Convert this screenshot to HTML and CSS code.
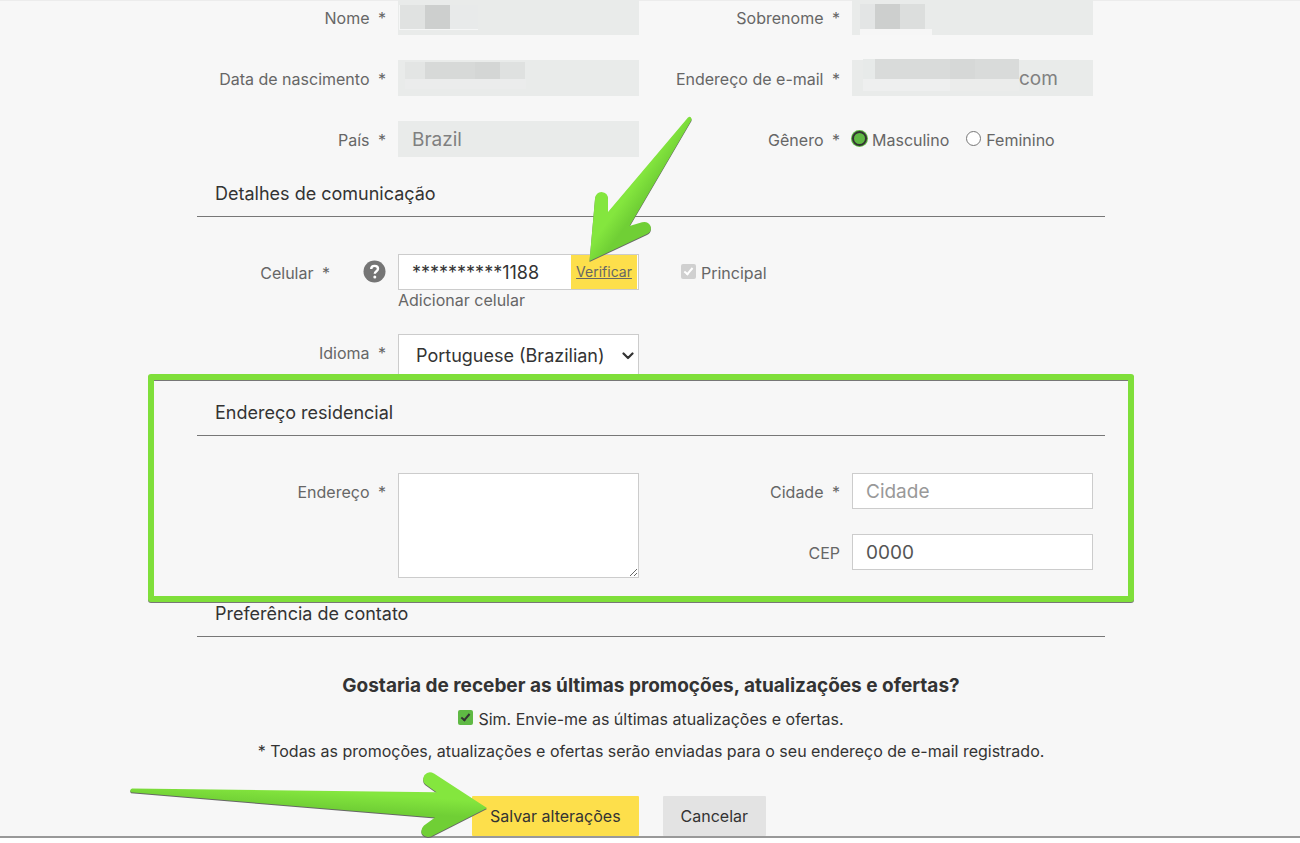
FILE: index.html
```html
<!DOCTYPE html>
<html lang="pt-BR">
<head>
  <meta charset="UTF-8" />
  <meta name="viewport" content="width=device-width, initial-scale=1.0"/>
  <title>Meu perfil</title>
  <link rel="stylesheet" href="styles.css">
</head>
<body>

<div class="page">
<form class="profile">

  <div class="grid personal">
    <div class="row">
      <label for="nome">Nome <span class="req">*</span></label>
      <div class="field">
        <input class="box" type="text" id="nome" disabled>
        <svg class="mask" width="241" height="40">
          <rect x="1" y="6" width="79" height="25" fill="#f5f6f6"/>
          <rect x="2" y="6" width="25" height="24" fill="#e0e2e1"/>
          <rect x="27" y="6" width="25" height="24" fill="#cdcfce"/>
          <rect x="52" y="6" width="28" height="24" fill="#e8eaea"/>
        </svg>
      </div>
    </div>
    <div class="row">
      <label for="sobrenome">Sobrenome <span class="req">*</span></label>
      <div class="field">
        <input class="box" type="text" id="sobrenome" disabled>
        <svg class="mask" width="241" height="40">
          <rect x="8" y="5" width="15" height="25" fill="#e3e5e5"/>
          <rect x="23" y="5" width="25" height="25" fill="#cdcfce"/>
          <rect x="48" y="5" width="25" height="25" fill="#dcdedd"/>
          <rect x="8" y="30" width="72" height="6" fill="#f6f6f6"/>
        </svg>
      </div>
    </div>
    <div class="row">
      <label for="nascimento">Data de nascimento <span class="req">*</span></label>
      <div class="field">
        <input class="box" type="text" id="nascimento" disabled>
        <svg class="mask" width="241" height="40">
          <rect x="7" y="2" width="20" height="17" fill="#e3e5e4"/>
          <rect x="27" y="2" width="50" height="17" fill="#d7d9d8"/>
          <rect x="77" y="2" width="25" height="17" fill="#d4d6d5"/>
          <rect x="102" y="2" width="25" height="17" fill="#dfe1e0"/>
          <rect x="7" y="19" width="121" height="10" fill="#ebecec"/>
        </svg>
      </div>
    </div>
    <div class="row">
      <label for="email">Endereço de e-mail <span class="req">*</span></label>
      <div class="field">
        <input class="box email" type="text" id="email" value="com" disabled>
        <svg class="mask email-mask" width="241" height="40">
          <rect x="11" y="0" width="12" height="20" fill="#e7eae9"/>
          <rect x="23" y="0" width="144" height="20" fill="#d9dbda"/>
          <rect x="98" y="0" width="25" height="20" fill="#d6d8d7"/>
          <rect x="11" y="20" width="87" height="12" fill="#eeefef"/>
          <rect x="98" y="20" width="69" height="12" fill="#ebeceb"/>
        </svg>
      </div>
    </div>
    <div class="row">
      <label for="pais">País <span class="req">*</span></label>
      <div class="field"><input class="box" type="text" id="pais" value="Brazil" disabled></div>
    </div>
    <div class="row">
      <span class="label">Gênero <span class="req">*</span></span>
      <div class="field radios">
        <label><input type="radio" name="genero" checked> Masculino</label>
        <label><input type="radio" name="genero"> Feminino</label>
      </div>
    </div>
  </div>

  <h2>Detalhes de comunicação</h2>
  <div class="grid contact">
    <div class="row">
      <label class="with-help" for="celular">Celular <span class="req">*</span></label>
      <svg class="help" width="23" height="23" viewBox="0 0 23 23">
        <circle cx="11.5" cy="11.5" r="11" fill="#757575"/>
        <path d="M8.2 9.1c0-2 1.4-3.2 3.4-3.2s3.4 1.1 3.4 2.9c0 2.5-3.2 2.4-3.2 5" fill="none" stroke="#fff" stroke-width="2.4"/>
        <circle cx="11.8" cy="16.9" r="1.5" fill="#fff"/>
      </svg>
      <div class="field">
        <div class="phone">
          <input type="text" id="celular" value="**********1188">
          <a href="#" class="verify">Verificar</a>
        </div>
        <a href="#" class="add">Adicionar celular</a>
      </div>
    </div>
    <label class="main-phone"><input type="checkbox" checked disabled> Principal</label>
    <div class="row">
      <label for="idioma">Idioma <span class="req">*</span></label>
      <div class="field select">
        <select id="idioma">
          <option>Portuguese (Brazilian)</option>
        </select>
        <svg class="chevron" width="12" height="8" viewBox="0 0 12 8">
          <path d="M1.5 1.5L6 6l4.500-4.500" fill="none" stroke="#333" stroke-width="2.200" stroke-linecap="round" stroke-linejoin="round"/>
        </svg>
      </div>
    </div>
  </div>

  <section class="address">
    <h2>Endereço residencial</h2>
    <div class="grid">
      <div class="row tall">
        <label for="endereco">Endereço <span class="req">*</span></label>
        <div class="field"><textarea class="box" id="endereco"></textarea></div>
      </div>
      <div class="row">
        <label for="cidade">Cidade <span class="req">*</span></label>
        <div class="field"><input class="box" type="text" id="cidade" placeholder="Cidade"></div>
      </div>
      <div class="row">
        <label for="cep">CEP</label>
        <div class="field"><input class="box" type="text" id="cep" value="0000"></div>
      </div>
    </div>
    <div class="highlight"></div>
  </section>

  <h2>Preferência de contato</h2>
  <div class="prefs">
    <h3>Gostaria de receber as últimas promoções, atualizações e ofertas?</h3>
    <label><input type="checkbox" checked> Sim. Envie-me as últimas atualizações e ofertas.</label>
    <p>* Todas as promoções, atualizações e ofertas serão enviadas para o seu endereço de e-mail registrado.</p>
  </div>

  <div class="buttons">
    <button type="submit" class="save">Salvar alterações</button>
    <button type="button" class="cancel">Cancelar</button>
  </div>

  <!-- arrow to the verify link -->
  <svg class="arrow arrow-verify" width="108" height="150" viewBox="586 115 108 150">
    <defs>
      <linearGradient id="g1" gradientUnits="userSpaceOnUse" x1="618" y1="208" x2="632" y2="218">
        <stop offset="0" stop-color="#84e63e"/>
        <stop offset="1" stop-color="#70cf35"/>
      </linearGradient>
    </defs>
    <path fill="url(#g1)" d="M589.500 262L595 199.500Q596 193 601.500 193Q608 193.500 608 200V213L688 118.500Q690.500 116.500 691.500 119.500V121L629.500 227L642 223.300Q648 222 650.500 227Q652 232.500 647 235Z"/>
  </svg>

  <!-- arrow to the save button -->
  <svg class="arrow arrow-save" width="362" height="70" viewBox="128 770 362 70">
    <defs>
      <linearGradient id="g2" gradientUnits="userSpaceOnUse" x1="400" y1="796" x2="399" y2="813">
        <stop offset="0" stop-color="#84e63e"/>
        <stop offset="1" stop-color="#70cf35"/>
      </linearGradient>
    </defs>
    <path fill="url(#g2)" d="M487 808L434 773.500Q428.500 770.500 424.500 775Q421.500 780 425 784L436.500 792.200L132 788.500Q129 790 131 792.300L435 817.500L424 825.500Q420 829.500 422 834Q425 838 431 836.500Z"/>
  </svg>
</form>
</div>

</body>
</html>
```

FILE: styles.css
```css
* {
  box-sizing: border-box;
}
body {
  margin: 0;
  background: #fff;
  color: #666;
  font-family: Inter, "Liberation Sans", sans-serif;
  font-size: 16px;
  line-height: 20px;
}
.page {
  padding-left: 2px;
  background: #f7f7f7;
  border-top: 1px solid #ececec;
  border-bottom: 2px solid #999;
}
.profile {
  position: relative;
  max-width: 908px;
  margin: 0 auto;
}
input, select, textarea, button {
  font-family: inherit;
}
a {
  color: inherit;
  text-decoration: none;
}
h2 {
  margin: 0 0 37px;
  padding: 2px 0 0 18px;
  border-bottom: 1px solid #777;
  color: #333;
  font-size: 18px;
  font-weight: 400;
  line-height: 44px;
}

/* form rows */
.grid {
  display: grid;
  grid-template-columns: 1fr 1fr;
  row-gap: 25px;
  margin-bottom: 13px;
}
.personal {
  margin-top: -2px;
}
.row {
  display: flex;
  gap: 12px;
  padding-right: 12px;
}
.tall {
  grid-row: span 2;
}
.row > label, .label {
  flex: 1;
  text-align: right;
  line-height: 38px;
  height: 36px;
}
.req {
  margin-left: 4px;
}
.field {
  position: relative;
  width: 241px;
}
.box {
  display: block;
  width: 100%;
  height: 36px;
  padding: 0 13px;
  border: 1px solid #ccc;
  border-radius: 0;
  background: #fff;
  color: #555;
  font-size: 19px;
}
.box::placeholder {
  color: #999;
}
.box:disabled {
  background: #e9ebea;
  border-color: #e9ebea;
  color: #808080;
}
.box.email {
  padding-left: 166px;
}
textarea.box {
  height: 105px;
}
.mask {
  position: absolute;
  top: 0;
  left: 0;
}
.email-mask {
  top: -1px;
}

/* radios and tick boxes */
.radios {
  display: flex;
  gap: 17px;
  padding-top: 2px;
}
.radios label, .main-phone, .prefs label {
  display: flex;
  align-items: center;
  gap: 5px;
  white-space: nowrap;
}
input[type="radio"], input[type="checkbox"] {
  appearance: none;
  flex: none;
  width: 15px;
  height: 15px;
  margin: 0 0 3px;
}
input[type="radio"] {
  border: 1px solid #777;
  border-radius: 50%;
  background: #fff;
}
input[type="radio"]:checked {
  border: 2px solid #333;
  background: #5fb944;
  box-shadow: 0 0 0 1px #5fb944;
}
input[type="checkbox"] {
  border-radius: 2px;
  background: #5fb944;
}
input[type="checkbox"]::after {
  content: "";
  display: block;
  width: 3px;
  height: 7px;
  margin: 2px 0 0 5px;
  border: solid #333;
  border-width: 0 2px 2px 0;
  transform: rotate(40deg);
}
input[type="checkbox"]:disabled {
  background: #d0d0d0;
}
input[type="checkbox"]:disabled::after {
  border-color: #fff;
}

/* phone and language */
.contact {
  row-gap: 23px;
  margin-bottom: 12px;
}
.row > .with-help {
  margin-right: 21px;
}
.help {
  flex: none;
  margin: 6px 0 0 0;
}
.phone {
  display: flex;
  height: 36px;
  padding-right: 1px;
  border: 1px solid #ccc;
  background: #fff;
}
.phone input {
  flex: 1;
  min-width: 0;
  padding: 0 0 0 13px;
  border: 0;
  background: none;
  color: #333;
  font-size: 18px;
}
.verify {
  width: 66px;
  background: #fddf4b;
  font-size: 14px;
  line-height: 34px;
  text-align: center;
  text-decoration: underline;
}
.add {
  display: block;
  line-height: 21px;
}
.main-phone {
  height: 36px;
  padding: 2px 0 0 30px;
}
select {
  display: block;
  appearance: none;
  width: 100%;
  height: 43px;
  padding: 0 17px;
  border: 1px solid #ccc;
  border-radius: 0;
  background: #fff;
  color: #333;
  font-size: 18px;
}
.chevron {
  position: absolute;
  top: 18px;
  right: 5px;
}

.address {
  position: relative;
}
.address .grid {
  grid-template-rows: 36px 44px;
  margin-bottom: 12px;
}
.highlight {
  position: absolute;
  top: -15px;
  right: -29px;
  bottom: -24px;
  left: -49px;
  border: 6px solid #7fdf3a;
  border-radius: 3px;
  filter: drop-shadow(0 1px 0 #777);
  pointer-events: none;
}

/* contact preferences */
.prefs {
  display: flex;
  flex-direction: column;
  align-items: center;
  gap: 12px;
  color: #333;
  white-space: nowrap;
}
.prefs h3 {
  margin: 0;
  font-size: 19px;
  line-height: 23px;
}
.prefs p {
  margin: 0;
}
.buttons {
  display: flex;
  justify-content: center;
  gap: 24px;
  margin-top: 35px;
  padding-right: 64px;
}
button {
  height: 40px;
  padding: 0 18px;
  border: 0;
  border-radius: 1px;
  color: #333;
  font-size: 16px;
}
.save {
  background: #fddf4b;
}
.cancel {
  background: #e3e3e3;
}

.arrow {
  position: absolute;
  filter: drop-shadow(0 1px 0 #666);
  pointer-events: none;
}
.arrow-verify {
  top: 115px;
  left: 389px;
}
.arrow-save {
  bottom: -4px;
  left: -69px;
}
```
